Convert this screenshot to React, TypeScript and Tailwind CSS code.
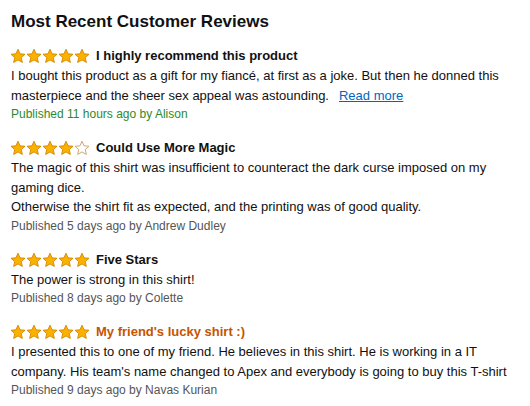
import React from "react";

type Review = {
  rating: number;
  title: string;
  lines: string[];
  published: string;
  readMore?: boolean;
  titleClass?: string;
  metaClass?: string;
};

const reviews: Review[] = [
  {
    rating: 5,
    title: "I highly recommend this product",
    lines: [
      "I bought this product as a gift for my fiancé, at first as a joke. But then he donned this masterpiece and the sheer sex appeal was astounding.",
    ],
    readMore: true,
    published: "Published 11 hours ago by Alison",
    metaClass: "text-[#2d8a2d]",
  },
  {
    rating: 4,
    title: "Could Use More Magic",
    lines: [
      "The magic of this shirt was insufficient to counteract the dark curse imposed on my gaming dice.",
      "Otherwise the shirt fit as expected, and the printing was of good quality.",
    ],
    published: "Published 5 days ago by Andrew Dudley",
  },
  {
    rating: 5,
    title: "Five Stars",
    lines: ["The power is strong in this shirt!"],
    published: "Published 8 days ago by Colette",
  },
  {
    rating: 5,
    title: "My friend's lucky shirt :)",
    lines: [
      "I presented this to one of my friend. He believes in this shirt. He is working in a IT company. His team's name changed to Apex and everybody is going to buy this T-shirt",
    ],
    published: "Published 9 days ago by Navas Kurian",
    titleClass: "text-[#c45500]",
  },
];

function Star({ filled }: { filled: boolean }) {
  return (
    <svg width="16" height="16" viewBox="0 0 24 24" className="block">
      <path
        d="M12 1.8l3.05 6.9 7.45.7-5.65 4.95 1.7 7.35L12 17.85 5.45 21.7l1.7-7.35L1.5 9.4l7.45-.7z"
        fill={filled ? "#fcb000" : "#ffffff"}
        stroke={filled ? "#d48a00" : "#c9a36a"}
        strokeWidth="1.4"
        strokeLinejoin="round"
      />
    </svg>
  );
}

function Stars({ rating }: { rating: number }) {
  return (
    <div className="flex items-center">
      {[0, 1, 2, 3, 4].map((i) => (
        <Star key={i} filled={i < rating} />
      ))}
    </div>
  );
}

export default function App() {
  return (
    <div
      className="w-[530px] h-[406px] bg-white pl-[11px] pr-[6px] pt-[11px] text-[#111] overflow-hidden"
      style={{ fontFamily: '"Liberation Sans", Arial, sans-serif' }}
    >
      <h2 className="text-[17px] font-bold leading-[22px] mb-[13px]">
        Most Recent Customer Reviews
      </h2>
      <div className="flex flex-col gap-[14px]">
        {reviews.map((r, idx) => (
          <div key={idx}>
            <div className="flex items-center gap-[6px] h-[20px] -ml-[1px]">
              <Stars rating={r.rating} />
              <span
                className={`text-[13px] font-bold leading-[20px] ${
                  r.titleClass ?? "text-[#111]"
                }`}
              >
                {r.title}
              </span>
            </div>
            <div className="text-[13px] leading-[19.5px]">
              {r.lines.map((l, i) => (
                <p key={i}>
                  {l}
                  {r.readMore && (
                    <a
                      href="#"
                      className="ml-[10px] text-[#0066c0] underline"
                    >
                      Read more
                    </a>
                  )}
                </p>
              ))}
            </div>
            <div
              className={`text-[12px] leading-[19px] ${
                r.metaClass ?? "text-[#555]"
              }`}
            >
              {r.published}
            </div>
          </div>
        ))}
      </div>
    </div>
  );
}
